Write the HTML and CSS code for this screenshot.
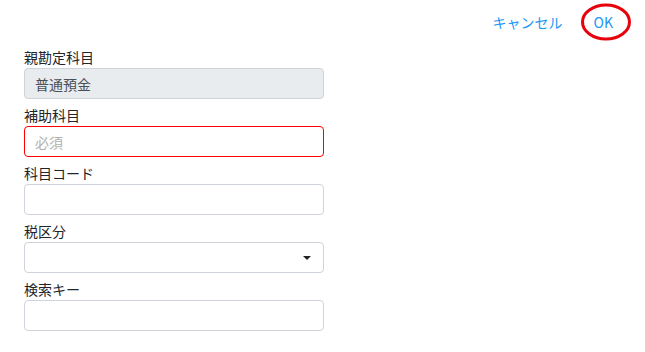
FILE: index.html
```html
<!DOCTYPE html>
<html lang="ja">
<head>
<meta charset="utf-8">
<link rel="stylesheet" href="styles.css">
</head>
<body>
<div class="page">
  <div class="toolbar">
    <button class="link-btn">キャンセル</button>
    <button class="link-btn ok">OK
      <svg class="circle" width="52" height="40" viewBox="0 0 52 40"><ellipse cx="26" cy="20" rx="23.5" ry="17" fill="none" stroke="#e8000b" stroke-width="3"/></svg>
    </button>
  </div>
  <form class="form">
    <div class="group">
      <label class="label">親勘定科目</label>
      <div class="input disabled">普通預金</div>
    </div>
    <div class="group">
      <label class="label">補助科目</label>
      <div class="input invalid"><span class="placeholder">必須</span></div>
    </div>
    <div class="group">
      <label class="label">科目コード</label>
      <div class="input"></div>
    </div>
    <div class="group">
      <label class="label">税区分</label>
      <div class="input select"><span class="caret"></span></div>
    </div>
    <div class="group">
      <label class="label">検索キー</label>
      <div class="input"></div>
    </div>
  </form>
</div>
</body>
</html>
```

FILE: styles.css
```css
* { box-sizing: border-box; }
html, body { margin: 0; padding: 0; background: #fff; }
body {
  font-family: "Noto Sans CJK JP", "Noto Sans", sans-serif;
  font-size: 14px;
  color: #212529;
}
.page { width: 645px; height: 352px; padding: 0 24px; }
.toolbar {
  display: flex;
  justify-content: flex-end;
  align-items: center;
  gap: 23px;
  height: 44px;
}
.link-btn {
  background: none;
  border: 0;
  padding: 0;
  font: inherit;
  font-size: 14px;
  color: #2196f3;
  line-height: 20px;
  position: relative;
  cursor: pointer;
}
.ok { padding: 0 8px; }
.circle { position: absolute; left: -6px; top: -10px; }
.form { width: 300px; display: flex; flex-direction: column; gap: 6px; padding-top: 3px; }
.group { display: flex; flex-direction: column; }
.label { line-height: 21px; height: 21px; }
.input {
  height: 31px;
  border: 1px solid #ced4da;
  border-radius: 4px;
  padding: 0 10px;
  display: flex;
  align-items: center;
  position: relative;
}
.disabled { background: #e9ecef; color: #495057; }
.invalid { border-color: #ff0000; }
.placeholder { color: #b0b0b0; }
.caret {
  position: absolute;
  right: 12px;
  top: 13px;
  width: 0; height: 0;
  border-left: 4px solid transparent;
  border-right: 4px solid transparent;
  border-top: 4px solid #222;
}
```
